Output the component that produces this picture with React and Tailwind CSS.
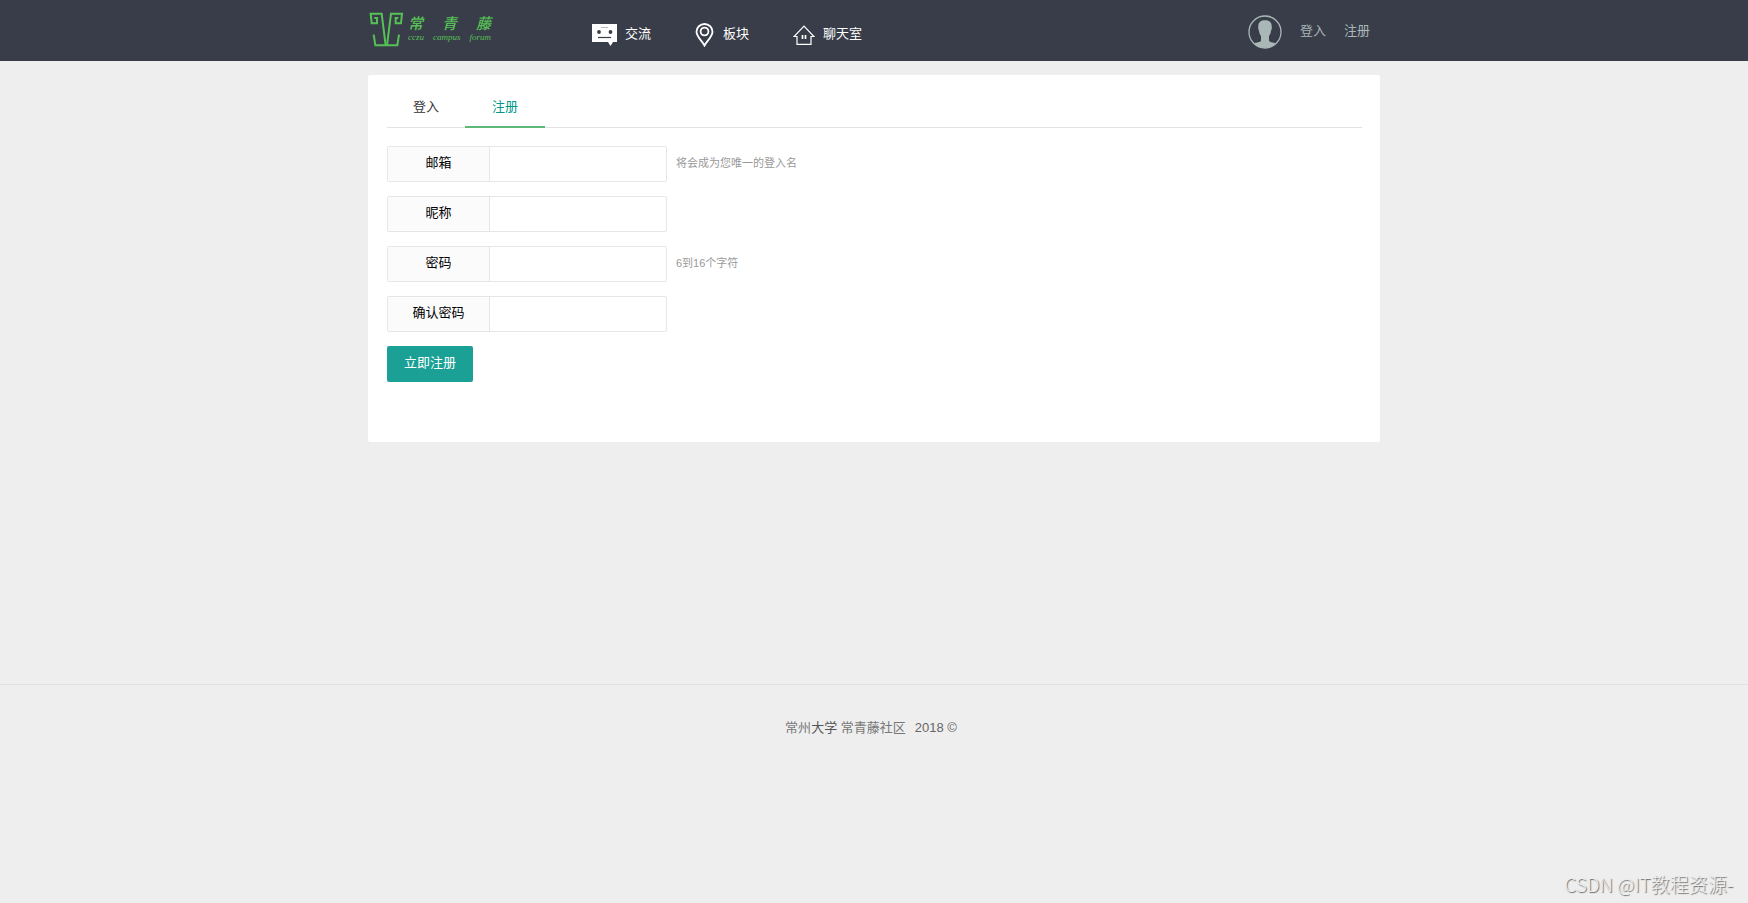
import React from "react";

const NAV = [
  { label: "交流", icon: <TalkIcon /> },
  { label: "板块", icon: <PinIcon /> },
  { label: "聊天室", icon: <HouseIcon /> },
];

const FIELDS = [
  { id: "email", label: "邮箱", type: "email", hint: "将会成为您唯一的登入名" },
  { id: "nickname", label: "昵称", type: "text" },
  { id: "password", label: "密码", type: "password", hint: "6到16个字符" },
  { id: "confirm", label: "确认密码", type: "password" },
];

function TalkIcon() {
  return (
    <svg className="h-[22px] w-[25px]" viewBox="0 0 25 22" aria-hidden="true">
      <path d="M0 0H25V18H21L18.500 22L16 18H0Z" fill="#fff" />
      <path d="M9 3.500H16" stroke="#b9bcc4" />
      <circle cx="7" cy="8" r="1.900" fill="#393d49" />
      <circle cx="18.500" cy="8" r="1.900" fill="#393d49" />
      <path d="M6 13.500H19" stroke="#393d49" strokeWidth="1.200" />
    </svg>
  );
}

function PinIcon() {
  return (
    <svg className="h-6 w-5" viewBox="0 0 20 24" fill="none" stroke="#fff" aria-hidden="true">
      <path d="M9.500 22.500C7.500 18.500 1.500 13.500 1.500 8.700A8 7.700 0 0 1 17.500 8.700C17.500 13.500 11.500 18.500 9.500 22.500Z" strokeWidth="1.800" />
      <circle cx="9.500" cy="8.500" r="3.900" strokeWidth="1.800" />
    </svg>
  );
}

function HouseIcon() {
  return (
    <svg className="h-5 w-[22px]" viewBox="0 0 22 20" fill="none" stroke="#fff" aria-hidden="true">
      <path d="M4 11.500H1L11 1L21 11.500H18V19.300H4Z" strokeWidth="1.200" />
      <path d="M9.500 10V14M12.500 10V14" strokeWidth="1.700" />
    </svg>
  );
}

function Avatar() {
  return (
    <svg className="h-[34px] w-[34px]" viewBox="0 0 34 34" aria-hidden="true">
      <circle cx="17" cy="17" r="16" fill="none" stroke="#a9b7b7" strokeWidth="1.300" />
      <path
        d="M17 5.300C13 5.300 10.300 7 10.300 11.500C10 12.200 10.200 14.500 11 15.800C11.300 18.500 12 20 13 21V25.500C12.500 27.500 8.500 27.300 5.800 28.300A16 16 0 0 0 28.200 28.300C25.500 27.300 21.500 27.500 21 25.500V21C22 20 22.700 18.500 23 15.800C23.800 14.500 24 12.200 23.700 11.500C23.700 7 21 5.300 17 5.300Z"
        fill="#a9b7b7"
      />
    </svg>
  );
}

function Logo() {
  return (
    <a href="#home" className="flex items-start gap-1 text-[#56c156]">
      <svg className="h-[35px] w-[35px]" viewBox="0 0 105 105" fill="none" stroke="currentColor" strokeWidth="6" aria-hidden="true">
        <path d="M50 100L38 5H5L8 34H24V18H16" />
        <path d="M54 100L66 5H99L96 34H80V18H88" />
        <path d="M14 68L19 100H85L90 68" />
      </svg>
      <span className="flex flex-col pt-[3px]">
        <span className="flex w-[83px] justify-between text-[15px] leading-[18px] font-medium italic">
          <span>常</span>
          <span>青</span>
          <span>藤</span>
        </span>
        <span className="flex w-[83px] justify-between font-['Liberation_Serif',serif] text-[9px] leading-[8px] italic">
          <span>cczu</span>
          <span>campus</span>
          <span>forum</span>
        </span>
      </span>
    </a>
  );
}

export default function App() {
  return (
    <div className="flex min-h-screen flex-col bg-[#eee] font-['Liberation_Sans','Noto_Sans_CJK_SC',sans-serif] text-[13px] leading-5">
      <header className="bg-[#393d49]">
        <div className="mx-auto flex h-[61px] max-w-[1012px] items-start">
          <div className="w-56 pt-3 pl-px">
            <Logo />
          </div>
          <nav className="flex gap-11 pt-6 text-white">
            {NAV.map((item) => (
              <a key={item.label} href="#nav" className="flex h-[22px] items-center gap-2">
                {item.icon}
                <span className="pb-0.5">{item.label}</span>
              </a>
            ))}
          </nav>
          <div className="ml-auto flex items-center gap-[18px] pt-[15px] pr-[10px] text-[#a9b7b7]">
            <Avatar />
            <a href="#login" className="pb-0.5">登入</a>
            <a href="#register" className="pb-0.5">注册</a>
          </div>
        </div>
      </header>

      <main className="mx-auto mt-3.5 w-full max-w-[1012px] rounded-[2px] bg-white pt-3 pr-[18px] pb-[60px] pl-[19px]">
        <nav className="flex h-[41px] border-b border-[#e2e2e2]">
          <a href="#login" className="h-[41px] px-[26px] pt-2.5 text-[#333]">登入</a>
          <a href="#register" className="h-[41px] border-b-2 border-[#5fb878] px-[27px] pt-2.5 text-[#009688]">注册</a>
        </nav>
        <form className="mt-[18px] flex flex-col items-start gap-3.5">
          {FIELDS.map((f) => (
            <div key={f.id} className="flex items-center gap-[9px]">
              <div className="flex h-9 w-[280px] overflow-hidden rounded-[2px] border border-[#e6e6e6]">
                <label htmlFor={f.id} className="w-[102px] border-r border-[#e6e6e6] bg-[#fbfbfb] pt-[6px] text-center text-black">
                  {f.label}
                </label>
                <input id={f.id} type={f.type} className="min-w-0 flex-1 px-2.5 outline-none" />
              </div>
              {f.hint && <span className="pb-0.5 text-[11px] text-[#999]">{f.hint}</span>}
            </div>
          ))}
          <button type="button" className="h-9 rounded-[2px] bg-[#1aa094] px-[17px] pb-0.5 text-white">
            立即注册
          </button>
        </form>
      </main>

      <footer className="mt-[242px] border-t border-[#e2e2e2] pt-[33px] text-center text-[#777]">
        <p className="flex justify-center gap-[9px] pr-1.5">
          <span>
            常州<span className="text-[#555]">大学</span> 常青藤社区
          </span>
          <span className="text-[#666]">2018 ©</span>
        </p>
      </footer>

      <p className="mt-auto pr-[15px] pb-1.5 text-right font-['Noto_Sans_CJK_SC',sans-serif] text-[19px] leading-[26px] font-light text-[#eee] [text-shadow:1px_1px_1px_#666]">
        CSDN @IT教程资源-
      </p>
    </div>
  );
}
